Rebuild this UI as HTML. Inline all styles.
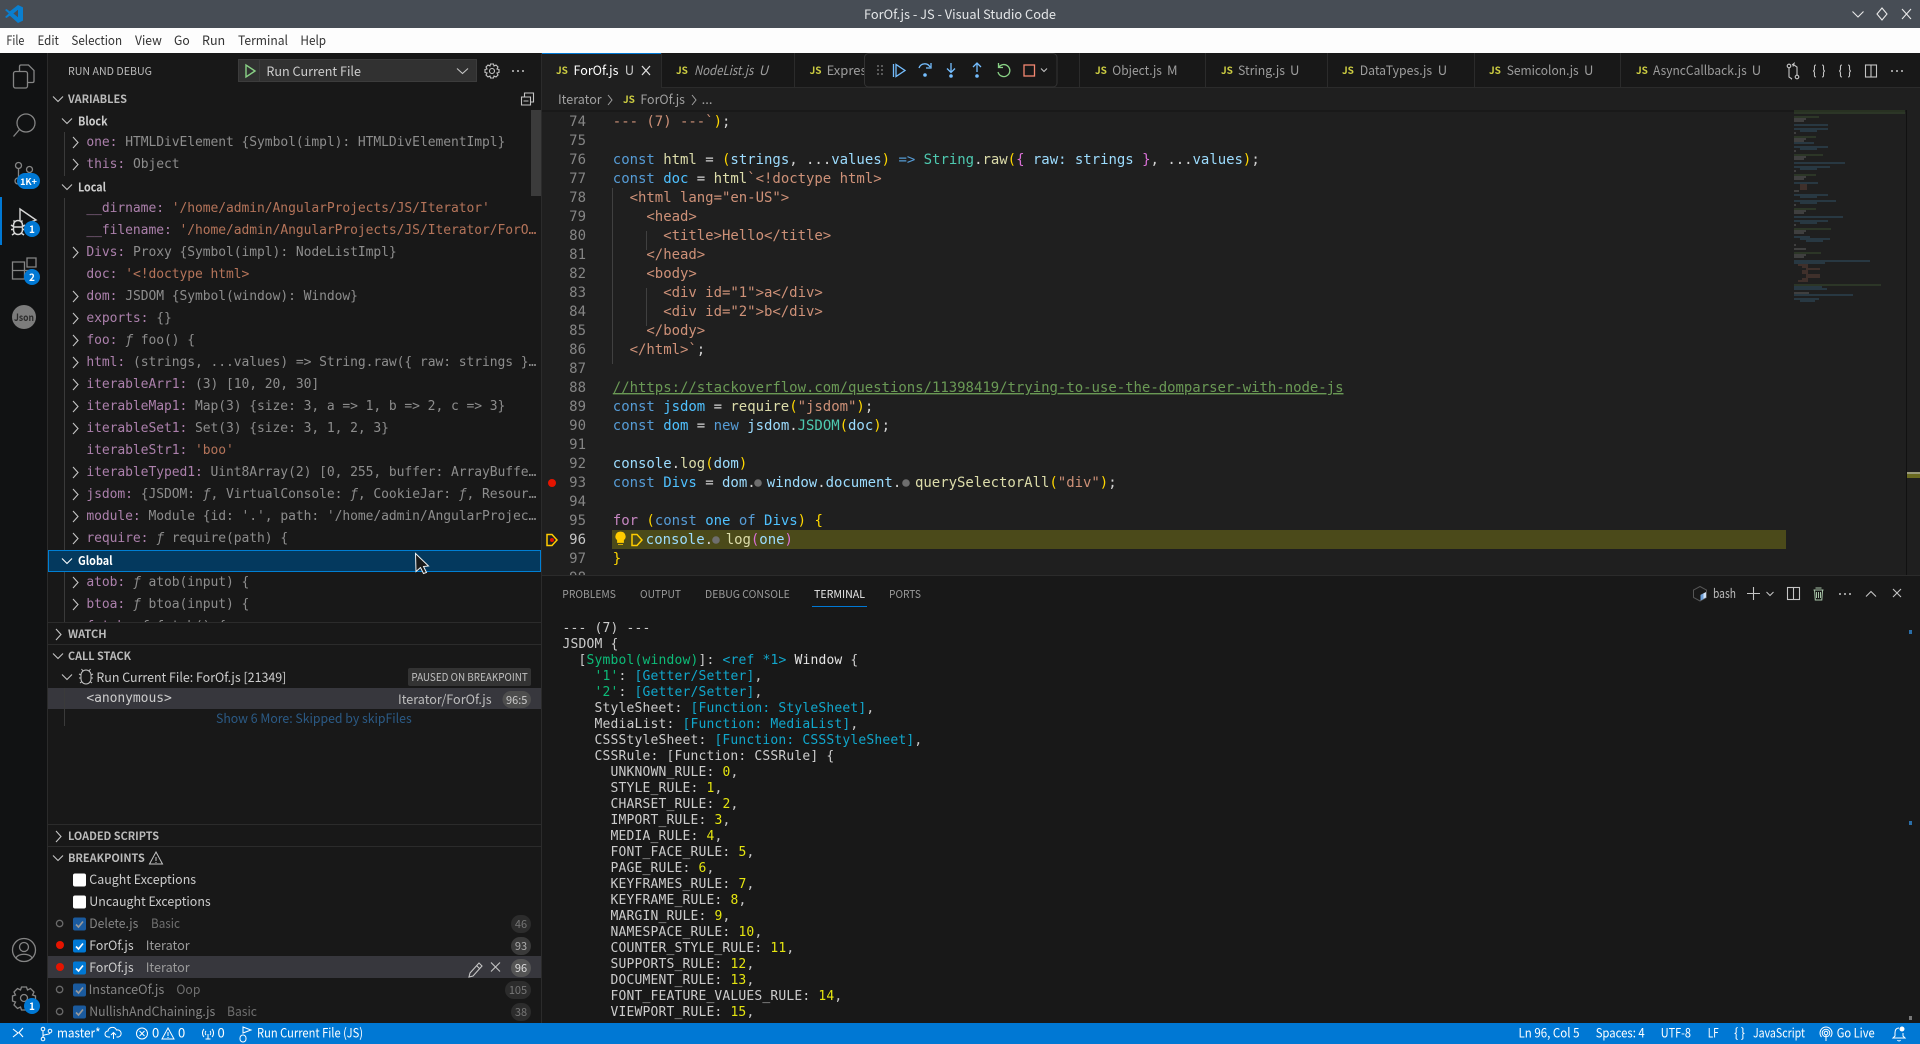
<!DOCTYPE html>
<html><head><meta charset="utf-8"><title>ForOf.js - JS - Visual Studio Code</title>
<style>
html,body{margin:0;padding:0;background:#181818;width:1920px;height:1044px;overflow:hidden}
svg{display:block;position:absolute;left:0;top:0}
text{white-space:pre;font-family:"Noto Sans CJK SC","Liberation Sans",sans-serif;font-size:13px}
.m text,text.m{font-family:"DejaVu Sans Mono",monospace;font-size:13px;letter-spacing:-.07px}
.c text{font-family:"DejaVu Sans Mono",monospace;font-size:14px;letter-spacing:-.03px;fill:#d4d4d4}
.t text{font-family:"DejaVu Sans Mono",monospace;font-size:13px;letter-spacing:.17px;fill:#cccccc}
.n text{font-family:"DejaVu Sans Mono",monospace;font-size:14px;fill:#858585;text-anchor:end}
.h{font-size:11px;font-weight:700;fill:#bbbbbb}
.b{font-size:12px;font-weight:700;fill:#cccccc}
.js{font-size:10px;font-weight:700;fill:#cbcb41}
.tb{fill:#9d9d9d}
.p{font-size:11px;fill:#9a9a9a}
.bc{fill:#a0a0a0}
.k{fill:#ac80ac}.v{fill:#8d8d8d}.st{fill:#b5745a}
.kw{fill:#569cd6}.vr{fill:#9cdcfe}.cn{fill:#4fc1ff}.str{fill:#ce9178}.fn{fill:#dcdcaa}.cl{fill:#4ec9b0}.pu{fill:#c586c0}.go{fill:#ffd700}.or{fill:#da70d6}.bl{fill:#179fff}.cm{fill:#6a9955}
.gr{fill:#0dbc79}.cy{fill:#11a8cd}.ye{fill:#e5e510}.wh{fill:#e5e5e5}
.ic{fill:none;stroke:#858585;stroke-width:1.3}
.ui{fill:none;stroke:#c5c5c5;stroke-width:1.1}
.ch{fill:none;stroke:#c5c5c5;stroke-width:1.1}
.bd{font-size:11px;fill:#cccccc;text-anchor:middle}
</style></head><body>
<svg width="1920" height="1044" viewBox="0 0 1920 1044" xmlns="http://www.w3.org/2000/svg">
<defs>
<clipPath id="ed"><rect x="542" y="110" width="1378" height="465"/></clipPath>
<clipPath id="vars"><rect x="48" y="110" width="493" height="512"/></clipPath>
<clipPath id="tabx"><rect x="542" y="53" width="322" height="34"/></clipPath>
</defs>
<!-- backgrounds -->
<rect width="1920" height="1044" fill="#181818"/>
<rect width="1920" height="28" fill="#474d55"/>
<rect y="28" width="1920" height="25" fill="#fdfdfd"/>
<rect y="53" width="47.5" height="970" fill="#111213"/>
<rect x="47" y="53" width="1" height="970" fill="#2b2b2b"/>
<rect x="541" y="53" width="1" height="970" fill="#2b2b2b"/>
<rect x="542" y="88" width="1378" height="487" fill="#1f1f1f"/>
<rect x="542" y="87" width="1378" height="1" fill="#2b2b2b"/>
<rect x="542" y="575" width="1378" height="1" fill="#2b2b2b"/>
<rect x="542" y="110" width="1364" height="2" fill="#191919"/>
<rect y="1023" width="1920" height="21" fill="#0078d4"/>

<!-- title bar -->
<path d="M18 5l5 2.400v13.200L18 23l-8.200-7.400L6.600 18 5 17l3.800-3.500L5 10l1.600-1 3.200 2.400zM18 9.700l-4.600 3.800 4.600 3.800z" fill="#0a7fcf"/>
<text x="864" y="19" fill="#e4e6e8" textLength="192" lengthAdjust="spacingAndGlyphs">ForOf.js - JS - Visual Studio Code</text>
<path d="M1852.500 11.500l5.500 5.500 5.500-5.500" fill="none" stroke="#e8e8e8" stroke-width="1.100"/>
<path d="M1882 8l5 6-5 6-5-6z" fill="none" stroke="#e8e8e8" stroke-width="1.100"/>
<path d="M1902 9l9 10M1911 9l-9 10" fill="none" stroke="#e8e8e8" stroke-width="1.100"/>

<!-- menu -->
<g fill="#333">
<text x="6.400" y="45" textLength="18" lengthAdjust="spacingAndGlyphs">File</text>
<text x="37.500" y="45" textLength="21.400" lengthAdjust="spacingAndGlyphs">Edit</text>
<text x="71.400" y="45" textLength="50.700" lengthAdjust="spacingAndGlyphs">Selection</text>
<text x="135" y="45" textLength="26.800" lengthAdjust="spacingAndGlyphs">View</text>
<text x="174" y="45" textLength="15.700" lengthAdjust="spacingAndGlyphs">Go</text>
<text x="202" y="45" textLength="23.200" lengthAdjust="spacingAndGlyphs">Run</text>
<text x="238" y="45" textLength="50" lengthAdjust="spacingAndGlyphs">Terminal</text>
<text x="300.400" y="45" textLength="25.700" lengthAdjust="spacingAndGlyphs">Help</text>
</g>

<!-- activity bar -->
<rect x="0" y="197" width="2" height="48" fill="#0078d4"/>
<path class="ic" d="M19.500 71v-4.500q0-1.500 1.500-1.500h7.500l5.500 5.500v10.500q0 1.500-1.500 1.500H27.500"/>
<rect class="ic" x="13.500" y="71.500" width="14" height="16.500" rx="2"/>
<circle class="ic" cx="26" cy="123" r="9"/><path class="ic" d="M19.500 129.500l-6 7"/>
<circle class="ic" cx="18.500" cy="165.500" r="3"/><circle class="ic" cx="29.500" cy="169.500" r="3"/><circle class="ic" cx="18" cy="181" r="3"/><path class="ic" d="M18.500 168.500v10M29.500 172.500c0 4-11 3-11 7"/>
<rect x="17" y="173" width="23" height="16" rx="8" fill="#0078d4"/>
<text class="bd" x="28.500" y="185" style="font-size:9px;font-weight:700;fill:#fff">1K+</text>
<path d="M20 221v-12l16 11-8 3" fill="none" stroke="#d7d7d7" stroke-width="1.400"/>
<path d="M13.500 225a4.500 4.500 0 0 1 9 0v5a4.500 4.500 0 0 1-9 0zM11 225l3 2M25 225l-3 2M11 229.500h3M25 229.500h-3M12 235l3-2M24 235l-3-2M15 222l-1.500-1.500M21 222l1.500-1.500M13.500 227h9" fill="none" stroke="#d7d7d7" stroke-width="1.500"/>
<circle cx="32" cy="229" r="8" fill="#0078d4"/><text class="bd" x="32" y="233" style="font-size:10px;font-weight:700;fill:#fff">1</text>
<path class="ic" d="M12.500 262h12v17h-12zM12.500 270.500h12M24.500 270.500h8.500v8.500h-8.500M27 258h9v9h-9z"/>
<circle cx="32" cy="277" r="8" fill="#0078d4"/><text class="bd" x="32" y="281" style="font-size:10px;font-weight:700;fill:#fff">2</text>
<circle cx="24" cy="317" r="12" fill="#7c7c7c"/>
<text x="14" y="321" style="font-size:10px;font-weight:700;fill:#2c2c2c" textLength="20" lengthAdjust="spacingAndGlyphs">Json</text>
<circle class="ic" cx="24" cy="950" r="11.500"/><circle class="ic" cx="24" cy="947" r="4.500"/><path class="ic" d="M16 958c2-5 14-5 16 0"/>
<g class="ic" transform="translate(24 998)"><circle r="3.500"/><path d="M-2.500-11h5l1 3 3-1.500 3.500 3.500-1.500 3 3 1v5l-3 1 1.500 3-3.500 3.500-3-1.500-1 3h-5l-1-3-3 1.500-3.500-3.500 1.500-3-3-1v-5l3-1-1.500-3 3.500-3.500 3 1.500z"/></g>
<circle cx="32" cy="1006" r="8" fill="#0078d4"/><text class="bd" x="32" y="1010" style="font-size:10px;font-weight:700;fill:#fff">1</text>

<!-- sidebar head -->
<text x="68" y="75" style="font-size:11px;fill:#bbbbbb" textLength="84" lengthAdjust="spacingAndGlyphs">RUN AND DEBUG</text>
<rect x="238.500" y="59.500" width="238" height="22" fill="#313131" stroke="#3c3c3c"/>
<rect x="259" y="60" width="1" height="21" fill="#3c3c3c"/>
<path d="M246 65v12l9-6z" fill="none" stroke="#89d185" stroke-width="1.400"/>
<text x="266.400" y="76" fill="#cccccc" textLength="94.600" lengthAdjust="spacingAndGlyphs">Run Current File</text>
<path class="ch" d="M457 68.500l5.500 5 5.500-5"/>
<g class="ui" transform="translate(492 71)"><circle r="2.500"/><path d="M-1.500-7h3l.5 2 2-1 2 2-1 2 2 .5v3l-2 .5 1 2-2 2-2-1-.5 2h-3l-.5-2-2 1-2-2 1-2-2-.5v-3l2-.5-1-2 2-2 2 1z"/></g>
<g fill="#c5c5c5"><circle cx="513" cy="71" r="1"/><circle cx="518" cy="71" r="1"/><circle cx="523" cy="71" r="1"/></g>

<!-- variables -->
<path class="ch" d="M53 96.500l5 5 5-5"/>
<text class="h" x="68" y="103" textLength="59" lengthAdjust="spacingAndGlyphs">VARIABLES</text>
<path class="ui" d="M521.500 97h9v8h-9zM524.500 97v-4h9v9h-3M523.500 101h5"/>

<rect x="48" y="550" width="493" height="22" fill="#04395e"/>
<rect x="48.500" y="550.500" width="492" height="21" fill="none" stroke="#007fd4"/>

<g clip-path="url(#vars)">
<rect x="64" y="132" width="1" height="44" fill="#3a3a3a"/>
<rect x="64" y="198" width="1" height="352" fill="#3a3a3a"/>
<rect x="64" y="572" width="1" height="50" fill="#3a3a3a"/>
<path class="ch" d="M62 118.500l5 5 5-5M62 184.500l5 5 5-5"/>
<text class="b" x="78" y="125.500" textLength="29.600" lengthAdjust="spacingAndGlyphs">Block</text>
<text class="b" x="78" y="191.500" textLength="28" lengthAdjust="spacingAndGlyphs">Local</text>
<path class="ch" d="M73 137l5 5.500-5 5.500M73 159l5 5.500-5 5.500M73 247l5 5.500-5 5.500M73 291l5 5.500-5 5.500M73 313l5 5.500-5 5.500M73 335l5 5.500-5 5.500M73 357l5 5.500-5 5.500M73 379l5 5.500-5 5.500M73 401l5 5.500-5 5.500M73 423l5 5.500-5 5.500M73 467l5 5.500-5 5.500M73 489l5 5.500-5 5.500M73 511l5 5.500-5 5.500M73 533l5 5.500-5 5.500M73 577l5 5.500-5 5.500M73 599l5 5.500-5 5.500"/>
<g class="m">
<text x="86.400" y="146"><tspan class="k">one: </tspan><tspan class="v">HTMLDivElement {Symbol(impl): HTMLDivElementImpl}</tspan></text>
<text x="86.400" y="168"><tspan class="k">this: </tspan><tspan class="v">Object</tspan></text>
<text x="86.400" y="212"><tspan class="k">__dirname: </tspan><tspan class="st">'/home/admin/AngularProjects/JS/Iterator'</tspan></text>
<text x="86.400" y="234"><tspan class="k">__filename: </tspan><tspan class="st">'/home/admin/AngularProjects/JS/Iterator/ForO…</tspan></text>
<text x="86.400" y="256"><tspan class="k">Divs: </tspan><tspan class="v">Proxy {Symbol(impl): NodeListImpl}</tspan></text>
<text x="86.400" y="278"><tspan class="k">doc: </tspan><tspan class="st">'&lt;!doctype html&gt;</tspan></text>
<text x="86.400" y="300"><tspan class="k">dom: </tspan><tspan class="v">JSDOM {Symbol(window): Window}</tspan></text>
<text x="86.400" y="322"><tspan class="k">exports: </tspan><tspan class="v">{}</tspan></text>
<text x="86.400" y="344"><tspan class="k">foo: </tspan><tspan class="v" font-style="italic">ƒ</tspan><tspan class="v"> foo() {</tspan></text>
<text x="86.400" y="366"><tspan class="k">html: </tspan><tspan class="v">(strings, ...values) =&gt; String.raw({ raw: strings }…</tspan></text>
<text x="86.400" y="388"><tspan class="k">iterableArr1: </tspan><tspan class="v">(3) [10, 20, 30]</tspan></text>
<text x="86.400" y="410"><tspan class="k">iterableMap1: </tspan><tspan class="v">Map(3) {size: 3, a =&gt; 1, b =&gt; 2, c =&gt; 3}</tspan></text>
<text x="86.400" y="432"><tspan class="k">iterableSet1: </tspan><tspan class="v">Set(3) {size: 3, 1, 2, 3}</tspan></text>
<text x="86.400" y="454"><tspan class="k">iterableStr1: </tspan><tspan class="st">'boo'</tspan></text>
<text x="86.400" y="476"><tspan class="k">iterableTyped1: </tspan><tspan class="v">Uint8Array(2) [0, 255, buffer: ArrayBuffe…</tspan></text>
<text x="86.400" y="498"><tspan class="k">jsdom: </tspan><tspan class="v">{JSDOM: </tspan><tspan class="v" font-style="italic">ƒ</tspan><tspan class="v">, VirtualConsole: </tspan><tspan class="v" font-style="italic">ƒ</tspan><tspan class="v">, CookieJar: </tspan><tspan class="v" font-style="italic">ƒ</tspan><tspan class="v">, Resour…</tspan></text>
<text x="86.400" y="520"><tspan class="k">module: </tspan><tspan class="v">Module {id: '.', path: '/home/admin/AngularProjec…</tspan></text>
<text x="86.400" y="542"><tspan class="k">require: </tspan><tspan class="v" font-style="italic">ƒ</tspan><tspan class="v"> require(path) {</tspan></text>
<text x="86.400" y="586"><tspan class="k">atob: </tspan><tspan class="v" font-style="italic">ƒ</tspan><tspan class="v"> atob(input) {</tspan></text>
<text x="86.400" y="608"><tspan class="k">btoa: </tspan><tspan class="v" font-style="italic">ƒ</tspan><tspan class="v"> btoa(input) {</tspan></text>
<text x="86.400" y="630"><tspan class="k">fetch: </tspan><tspan class="v" font-style="italic">ƒ</tspan><tspan class="v"> fetch() {</tspan></text>
</g>
</g>
<rect x="531" y="110" width="10" height="86" fill="#3f3f3f" fill-opacity=".9"/>
<path d="M62 558.500l5 5 5-5" fill="none" stroke="#ffffff" stroke-width="1.100"/>
<text x="78" y="565" style="font-size:12px;font-weight:700;fill:#ffffff" textLength="34.600" lengthAdjust="spacingAndGlyphs">Global</text>
<path d="M415.500 553.500l13 12.500-5 .5 3 6-3 1-3-6-4.500 4z" fill="#1a1a1a" stroke="#f0f0f0" stroke-width="1"/>

<!-- watch / call stack -->
<rect x="48" y="622" width="493" height="1" fill="#2b2b2b"/>
<path class="ch" d="M56 629l5 5.500-5 5.500"/>
<text class="h" x="68" y="638" textLength="38.600" lengthAdjust="spacingAndGlyphs">WATCH</text>
<rect x="48" y="644" width="493" height="1" fill="#2b2b2b"/>
<path class="ch" d="M53 653.500l5 5 5-5"/>
<text class="h" x="68" y="660" textLength="63" lengthAdjust="spacingAndGlyphs">CALL STACK</text>
<path class="ch" d="M62 674.500l5 5 5-5"/>
<path d="M81 675a5 5 0 0 1 10 0v4a5 5 0 0 1-10 0zM79 674l2 1M93 674l-2 1M79 678h2M93 678h-2M80 683l2-1.500M92 683l-2-1.500M83 671l-1.500-2M89 671l1.500-2" fill="none" stroke="#c5c5c5" stroke-width="1"/>
<text x="96.400" y="682" fill="#cccccc" textLength="190" lengthAdjust="spacingAndGlyphs">Run Current File: ForOf.js [21349]</text>
<rect x="408" y="668" width="123" height="18" rx="2" fill="#333333"/>
<text x="411.400" y="681" style="font-size:11px;fill:#c0c0c0" textLength="116.400" lengthAdjust="spacingAndGlyphs">PAUSED ON BREAKPOINT</text>
<rect x="48" y="688" width="493" height="21" fill="#37373d"/>
<rect x="64" y="688" width="1" height="38" fill="#3a3a3a"/>
<text class="m" x="86.400" y="702" fill="#cccccc">&lt;anonymous&gt;</text>
<text x="398" y="704" fill="#bdbdbd" textLength="93.600" lengthAdjust="spacingAndGlyphs">Iterator/ForOf.js</text>
<rect x="502.500" y="691" width="28.500" height="17" rx="8.500" fill="#4d4d4d"/>
<text class="bd" x="516.700" y="704">96:5</text>
<text x="216" y="723" fill="#2b5a85" textLength="195.700" lengthAdjust="spacingAndGlyphs">Show 6 More: Skipped by skipFiles</text>

<!-- loaded/breakpoints -->
<rect x="48" y="824" width="493" height="1" fill="#2b2b2b"/>
<path class="ch" d="M56 831l5 5.500-5 5.500"/>
<text class="h" x="68" y="840" textLength="91" lengthAdjust="spacingAndGlyphs">LOADED SCRIPTS</text>
<rect x="48" y="846" width="493" height="1" fill="#2b2b2b"/>
<path class="ch" d="M53 855.500l5 5 5-5"/>
<text class="h" x="68" y="862" textLength="76.800" lengthAdjust="spacingAndGlyphs">BREAKPOINTS</text>
<path d="M156 852l6.500 12h-13zM156 857v4M156 862v1" fill="none" stroke="#c5c5c5" stroke-width="1"/>
<rect x="48" y="956" width="493" height="22" fill="#37373d"/>
<rect x="73" y="873.500" width="13" height="13" rx="2" fill="#ffffff"/>
<rect x="73" y="895.500" width="13" height="13" rx="2" fill="#ffffff"/>
<text x="89.300" y="884" fill="#cccccc" textLength="106.800" lengthAdjust="spacingAndGlyphs">Caught Exceptions</text>
<text x="89.300" y="906" fill="#cccccc" textLength="121.400" lengthAdjust="spacingAndGlyphs">Uncaught Exceptions</text>
<circle cx="59.600" cy="923.500" r="3.200" fill="none" stroke="#6a6a6a" stroke-width="1.300"/>
<circle cx="59.600" cy="989.500" r="3.200" fill="none" stroke="#6a6a6a" stroke-width="1.300"/>
<circle cx="59.600" cy="1011.500" r="3.200" fill="none" stroke="#6a6a6a" stroke-width="1.300"/>
<circle cx="60" cy="945" r="4" fill="#e51400"/>
<circle cx="60" cy="967" r="4" fill="#e51400"/>
<g>
<rect x="73" y="917.500" width="13" height="13" rx="2" fill="#1a5a9e"/><path d="M76 924.500l2.500 2.500 4.500-5.500" fill="none" stroke="#9a9a9a" stroke-width="1.600"/>
<rect x="73" y="939.500" width="13" height="13" rx="2" fill="#0078d4"/><path d="M76 946.500l2.500 2.500 4.500-5.500" fill="none" stroke="#fff" stroke-width="1.600"/>
<rect x="73" y="961.500" width="13" height="13" rx="2" fill="#0078d4"/><path d="M76 968.500l2.500 2.500 4.500-5.500" fill="none" stroke="#fff" stroke-width="1.600"/>
<rect x="73" y="983.500" width="13" height="13" rx="2" fill="#1a5a9e"/><path d="M76 990.500l2.500 2.500 4.500-5.500" fill="none" stroke="#9a9a9a" stroke-width="1.600"/>
<rect x="73" y="1005.500" width="13" height="13" rx="2" fill="#1a5a9e"/><path d="M76 1012.500l2.500 2.500 4.500-5.500" fill="none" stroke="#9a9a9a" stroke-width="1.600"/>
</g>
<text x="89.300" y="928" fill="#858585" textLength="49" lengthAdjust="spacingAndGlyphs">Delete.js</text><text x="151" y="928" fill="#6f6f6f" textLength="29" lengthAdjust="spacingAndGlyphs">Basic</text>
<text x="89.300" y="950" fill="#cccccc" textLength="44.300" lengthAdjust="spacingAndGlyphs">ForOf.js</text><text x="145.700" y="950" fill="#9a9a9a" textLength="44" lengthAdjust="spacingAndGlyphs">Iterator</text>
<text x="89.300" y="972" fill="#cccccc" textLength="44.300" lengthAdjust="spacingAndGlyphs">ForOf.js</text><text x="145.700" y="972" fill="#9a9a9a" textLength="44" lengthAdjust="spacingAndGlyphs">Iterator</text>
<text x="88.600" y="994" fill="#858585" textLength="75.700" lengthAdjust="spacingAndGlyphs">InstanceOf.js</text><text x="176.400" y="994" fill="#6f6f6f" textLength="24" lengthAdjust="spacingAndGlyphs">Oop</text>
<text x="89.300" y="1016" fill="#858585" textLength="126" lengthAdjust="spacingAndGlyphs">NullishAndChaining.js</text><text x="227" y="1016" fill="#6f6f6f" textLength="30" lengthAdjust="spacingAndGlyphs">Basic</text>
<path d="M470 973l9-10 3 3-9 10-4 1zM476.500 965.500l3 3" fill="none" stroke="#c5c5c5" stroke-width="1.100"/>
<path d="M491 962.500l9 9M500 962.500l-9 9" fill="none" stroke="#c5c5c5" stroke-width="1.100"/>
<rect x="511" y="915" width="20" height="18" rx="9" fill="#2c2c2c"/><text class="bd" x="521" y="928" style="fill:#777">46</text>
<rect x="511" y="937" width="20" height="18" rx="9" fill="#3a3a3a"/><text class="bd" x="521" y="950" style="fill:#aaa">93</text>
<rect x="511" y="959" width="20" height="18" rx="9" fill="#555555"/><text class="bd" x="521" y="972" style="fill:#e0e0e0">96</text>
<rect x="505" y="981" width="26" height="18" rx="9" fill="#2c2c2c"/><text class="bd" x="518" y="994" style="fill:#777">105</text>
<rect x="511" y="1003" width="20" height="18" rx="9" fill="#2c2c2c"/><text class="bd" x="521" y="1016" style="fill:#777">38</text>

<!-- tabs -->
<rect x="542" y="53" width="119" height="35" fill="#1f1f1f"/>
<rect x="542" y="53" width="119" height="1" fill="#0078d4"/>
<g fill="#2b2b2b"><rect x="661" y="53" width="1" height="34"/><rect x="794" y="53" width="1" height="34"/><rect x="1079" y="53" width="1" height="34"/><rect x="1205" y="53" width="1" height="34"/><rect x="1327" y="53" width="1" height="34"/><rect x="1474" y="53" width="1" height="34"/><rect x="1620" y="53" width="1" height="34"/></g>
<text class="js" x="556" y="74">JS</text>
<text x="573.500" y="75" fill="#ffffff" textLength="45" lengthAdjust="spacingAndGlyphs">ForOf.js</text>
<text x="624.800" y="75" fill="#c6c6c6">U</text>
<path d="M642 66l8 9M650 66l-8 9" fill="none" stroke="#dddddd" stroke-width="1.300"/>
<text class="js" x="676" y="74">JS</text>
<text class="tb" x="694" y="75" font-style="italic" textLength="59.400" lengthAdjust="spacingAndGlyphs">NodeList.js</text>
<text class="tb" x="758.800" y="75" font-style="italic">U</text>
<text class="js" x="809.600" y="74">JS</text>
<g clip-path="url(#tabx)"><text class="tb" x="826.600" y="75">Expressions.js</text></g>
<text class="js" x="1095" y="74">JS</text>
<text class="tb" x="1112.300" y="75" textLength="49.600" lengthAdjust="spacingAndGlyphs">Object.js</text>
<text class="tb" x="1167" y="75">M</text>
<text class="js" x="1221" y="74">JS</text>
<text class="tb" x="1238" y="75" textLength="47" lengthAdjust="spacingAndGlyphs">String.js</text>
<text class="tb" x="1290" y="75">U</text>
<text class="js" x="1342" y="74">JS</text>
<text class="tb" x="1359.700" y="75" textLength="72.400" lengthAdjust="spacingAndGlyphs">DataTypes.js</text>
<text class="tb" x="1437.700" y="75">U</text>
<text class="js" x="1489" y="74">JS</text>
<text class="tb" x="1506.700" y="75" textLength="72" lengthAdjust="spacingAndGlyphs">Semicolon.js</text>
<text class="tb" x="1584" y="75">U</text>
<text class="js" x="1636" y="74">JS</text>
<text class="tb" x="1653" y="75" textLength="93.700" lengthAdjust="spacingAndGlyphs">AsyncCallback.js</text>
<text class="tb" x="1751.700" y="75">U</text>
<!-- tab actions -->
<g class="ui">
<circle cx="1789" cy="66" r="1.800"/><circle cx="1797" cy="77" r="1.800"/><path d="M1789 68v9l3 2M1797 75v-8l-3-2M1792 65l2-1.500-1 3M1792 79h-1"/>
<path d="M1816 65c-2 0-1.500 2-1.500 3.500s-.5 2.500-1.500 2.500c1 0 1.500 1 1.500 2.500s-.5 3.500 1.500 3.500M1822 65c2 0 1.500 2 1.500 3.500s.5 2.500 1.500 2.500c-1 0-1.500 1-1.500 2.500s.5 3.500-1.500 3.500"/>
<path d="M1842 65c-2 0-1.500 2-1.500 3.500s-.5 2.500-1.500 2.500c1 0 1.500 1 1.500 2.500s-.5 3.500 1.500 3.500M1848 65c2 0 1.500 2 1.500 3.500s.5 2.500 1.500 2.500c-1 0-1.500 1-1.500 2.500s.5 3.500-1.500 3.500"/>
<rect x="1865.500" y="65" width="11" height="12"/><path d="M1871 65v12"/>
</g>
<g fill="#c5c5c5"><circle cx="1892" cy="71" r="1"/><circle cx="1897" cy="71" r="1"/><circle cx="1902" cy="71" r="1"/></g>

<!-- debug toolbar -->
<rect x="864.500" y="53.500" width="192.500" height="33.500" rx="4" fill="#181818" stroke="#333333"/>
<g fill="#8a8a8a"><circle cx="878" cy="66" r=".9"/><circle cx="882" cy="66" r=".9"/><circle cx="878" cy="70" r=".9"/><circle cx="882" cy="70" r=".9"/><circle cx="878" cy="74" r=".9"/><circle cx="882" cy="74" r=".9"/></g>
<path d="M893.500 64v13M896 64.500v12l9-6z" fill="none" stroke="#75beff" stroke-width="1.300"/>
<path d="M919 68a6 6 0 0 1 11-1M931 63v5h-5" fill="none" stroke="#75beff" stroke-width="1.300"/><circle cx="925" cy="75" r="1.800" fill="#75beff"/>
<path d="M951 63v9M947 68.500l4 4 4-4" fill="none" stroke="#75beff" stroke-width="1.300"/><circle cx="951" cy="76" r="1.800" fill="#75beff"/>
<path d="M977 72v-9M973 67l4-4 4 4" fill="none" stroke="#75beff" stroke-width="1.300"/><circle cx="977" cy="76" r="1.800" fill="#75beff"/>
<path d="M999 67a6 6 0 1 1-1 5M998.500 63v4.500h4.500" fill="none" stroke="#89d185" stroke-width="1.300"/>
<rect x="1024" y="65" width="10.500" height="11" fill="none" stroke="#f48771" stroke-width="1.300"/>
<path d="M1041 68.500l3 3 3-3" fill="none" stroke="#c5c5c5" stroke-width="1"/>

<!-- breadcrumb -->
<text class="bc" x="558" y="104" textLength="43.700" lengthAdjust="spacingAndGlyphs">Iterator</text>
<path d="M608 95l4 5-4 5" fill="none" stroke="#a0a0a0" stroke-width="1"/>
<text class="js" x="623" y="103">JS</text>
<text class="bc" x="640.400" y="104" textLength="44.600" lengthAdjust="spacingAndGlyphs">ForOf.js</text>
<path d="M692 95l4 5-4 5" fill="none" stroke="#a0a0a0" stroke-width="1"/>
<text class="bc" x="701.600" y="104">...</text>

<!-- editor -->
<g clip-path="url(#ed)">
<rect x="612" y="530" width="1174" height="19" fill="#4b4a1a"/>
<rect x="612" y="188" width="1" height="176" fill="#404040"/>
<rect x="646" y="231" width="1" height="19" fill="#404040"/>
<rect x="646" y="288" width="1" height="38" fill="#404040"/>
<g class="n">
<text x="586" y="126">74</text><text x="586" y="145">75</text><text x="586" y="164">76</text><text x="586" y="183">77</text><text x="586" y="202">78</text><text x="586" y="221">79</text><text x="586" y="240">80</text><text x="586" y="259">81</text><text x="586" y="278">82</text><text x="586" y="297">83</text><text x="586" y="316">84</text><text x="586" y="335">85</text><text x="586" y="354">86</text><text x="586" y="373">87</text><text x="586" y="392">88</text><text x="586" y="411">89</text><text x="586" y="430">90</text><text x="586" y="449">91</text><text x="586" y="468">92</text><text x="586" y="487">93</text><text x="586" y="506">94</text><text x="586" y="525">95</text><text x="586" y="544" style="fill:#c6c6c6">96</text><text x="586" y="563">97</text><text x="586" y="582">98</text>
</g>
<circle cx="552" cy="483" r="4" fill="#e51400"/>
<path d="M547 534.500h5l5 5.500-5 5.500h-5z" fill="none" stroke="#ffcc00" stroke-width="1.500"/><circle cx="552" cy="540" r="2" fill="#e51400"/>
<g class="c">
<text x="612.800" y="126"><tspan class="str">--- (7) ---`</tspan><tspan class="go">)</tspan>;</text>
<text x="612.800" y="164"><tspan class="kw">const</tspan> <tspan class="fn">html</tspan> = <tspan class="go">(</tspan><tspan class="vr">strings</tspan>, ...<tspan class="vr">values</tspan><tspan class="go">)</tspan> <tspan class="kw">=&gt;</tspan> <tspan class="cl">String</tspan>.<tspan class="fn">raw</tspan><tspan class="go">(</tspan><tspan class="or">{</tspan> <tspan class="vr">raw:</tspan> <tspan class="vr">strings</tspan> <tspan class="or">}</tspan>, ...<tspan class="vr">values</tspan><tspan class="go">)</tspan>;</text>
<text x="612.800" y="183"><tspan class="kw">const</tspan> <tspan class="cn">doc</tspan> = <tspan class="fn">html</tspan><tspan class="str">`&lt;!doctype html&gt;</tspan></text>
<text x="612.800" y="202" style="fill:#ce9178">  &lt;html lang="en-US"&gt;</text>
<text x="612.800" y="221" style="fill:#ce9178">    &lt;head&gt;</text>
<text x="612.800" y="240" style="fill:#ce9178">      &lt;title&gt;Hello&lt;/title&gt;</text>
<text x="612.800" y="259" style="fill:#ce9178">    &lt;/head&gt;</text>
<text x="612.800" y="278" style="fill:#ce9178">    &lt;body&gt;</text>
<text x="612.800" y="297" style="fill:#ce9178">      &lt;div id="1"&gt;a&lt;/div&gt;</text>
<text x="612.800" y="316" style="fill:#ce9178">      &lt;div id="2"&gt;b&lt;/div&gt;</text>
<text x="612.800" y="335" style="fill:#ce9178">    &lt;/body&gt;</text>
<text x="612.800" y="354"><tspan class="str">  &lt;/html&gt;`</tspan>;</text>
<text x="612.800" y="392" style="fill:#6a9955;text-decoration:underline">//https://stackoverflow.com/questions/11398419/trying-to-use-the-domparser-with-node-js</text>
<text x="612.800" y="411"><tspan class="kw">const</tspan> <tspan class="cn">jsdom</tspan> = <tspan class="fn">require</tspan><tspan class="go">(</tspan><tspan class="str">"jsdom"</tspan><tspan class="go">)</tspan>;</text>
<text x="612.800" y="430"><tspan class="kw">const</tspan> <tspan class="cn">dom</tspan> = <tspan class="kw">new</tspan> <tspan class="vr">jsdom</tspan>.<tspan class="cl">JSDOM</tspan><tspan class="go">(</tspan><tspan class="vr">doc</tspan><tspan class="go">)</tspan>;</text>
<text x="612.800" y="468"><tspan class="vr">console</tspan>.<tspan class="fn">log</tspan><tspan class="go">(</tspan><tspan class="vr">dom</tspan><tspan class="go">)</tspan></text>
<text x="612.800" y="487"><tspan class="kw">const</tspan> <tspan class="cn">Divs</tspan> = <tspan class="vr">dom</tspan>.</text>
<circle cx="758" cy="483" r="3.800" fill="#6e6e6e"/>
<text x="766.800" y="487"><tspan class="vr">window</tspan>.<tspan class="vr">document</tspan>.</text>
<circle cx="906" cy="483" r="3.800" fill="#6e6e6e"/>
<text x="915" y="487"><tspan class="fn">querySelectorAll</tspan><tspan class="go">(</tspan><tspan class="str">"div"</tspan><tspan class="go">)</tspan>;</text>
<text x="612.800" y="525"><tspan class="pu">for</tspan> <tspan class="go">(</tspan><tspan class="kw">const</tspan> <tspan class="cn">one</tspan> <tspan class="kw">of</tspan> <tspan class="cn">Divs</tspan><tspan class="go">)</tspan> <tspan class="go">{</tspan></text>
<path d="M620.500 532a4.500 4.500 0 0 1 3 8v2.500h-6V540a4.500 4.500 0 0 1 3-8zM618 544.500h5" fill="#ffcc00" stroke="#ffcc00" stroke-width=".8"/>
<path d="M632 534.500h5l5 5.500-5 5.500h-5z" fill="none" stroke="#ffcc00" stroke-width="1.500"/>
<text x="645.800" y="544"><tspan class="vr">console</tspan>.</text>
<circle cx="716" cy="540" r="3.800" fill="#6e6e6e"/>
<text x="725.700" y="544"><tspan class="fn">log</tspan><tspan class="or">(</tspan><tspan class="vr">one</tspan><tspan class="or">)</tspan></text>
<text x="612.800" y="563"><tspan class="go">}</tspan></text>
</g>
</g>

<!-- minimap -->
<g fill="none" stroke-width="1" opacity=".6">
<path stroke="#4a6a3a" d="M1794 111h111M1794 113h111M1794 117h25M1794 137h22M1794 155h29M1794 175h22M1794 209h22M1794 229h37M1794 253h27M1794 285h87"/>
<path stroke="#8a8a8a" d="M1794 119h12M1794 121h10M1794 139h12M1794 141h10M1794 157h12M1794 159h10M1794 177h12M1794 179h10M1794 211h12M1794 213h10M1794 231h12M1794 233h10M1794 255h12M1794 257h10M1794 249h12M1794 133h2M1794 151h2M1794 171h2M1794 191h5M1794 205h2M1794 225h2M1794 245h2M1794 293h15"/>
<path stroke="#3f7396" d="M1794 125h34M1794 129h34M1800 131h17M1794 143h20M1794 147h34M1800 149h17M1794 163h51M1794 167h36M1800 169h17M1794 183h24M1794 195h34M1800 197h17M1794 201h42M1800 203h17M1794 217h49M1794 221h34M1800 223h17M1794 237h16M1800 239h30M1806 241h17M1794 261h76M1794 263h31M1794 287h28M1794 289h33M1794 295h59M1794 299h25M1800 301h15"/>
<path stroke="#8a5a48" d="M1800 185h7M1800 187h7M1800 189h7M1798 265h10M1802 267h6M1806 269h14M1802 271h6M1802 273h6M1806 275h14M1806 277h14M1802 279h6M1798 281h10"/>
</g>
<rect x="1906" y="110" width="1" height="465" fill="#111"/>
<rect x="1907" y="472" width="13" height="2" fill="#9a9a7a"/>
<rect x="1907" y="474" width="13" height="4" fill="#6a6a20"/>

<!-- panel -->
<text class="p" x="562.300" y="598" textLength="53.600" lengthAdjust="spacingAndGlyphs">PROBLEMS</text>
<text class="p" x="640" y="598" textLength="41" lengthAdjust="spacingAndGlyphs">OUTPUT</text>
<text class="p" x="705" y="598" textLength="84.800" lengthAdjust="spacingAndGlyphs">DEBUG CONSOLE</text>
<text x="814" y="598" style="font-size:11px;fill:#e7e7e7" textLength="51" lengthAdjust="spacingAndGlyphs">TERMINAL</text>
<text class="p" x="889" y="598" textLength="32" lengthAdjust="spacingAndGlyphs">PORTS</text>
<rect x="812" y="606" width="55" height="1" fill="#0078d4"/>
<path d="M1700 586.500l6.500 3.500v7.500l-6.500 3.500-6.500-3.500V590z" fill="none" stroke="#555" stroke-width="1"/>
<path d="M1700.500 595l5.500-3v5.500l-5.500 3z" fill="#cfe0f4"/><path d="M1700.500 595l3-1.500v5.500l-3 1.500z" fill="#6d9fd8"/>
<text x="1713" y="598" fill="#bdbdbd" textLength="23" lengthAdjust="spacingAndGlyphs">bash</text>
<path d="M1747 593.500h13M1753.500 587v13" fill="none" stroke="#c5c5c5" stroke-width="1.100"/>
<path d="M1766.500 592l3.500 3.500 3.500-3.500" fill="none" stroke="#c5c5c5" stroke-width="1"/>
<rect x="1787.500" y="587.500" width="12" height="12" fill="none" stroke="#c5c5c5" stroke-width="1.100"/><path d="M1793.500 587.500v12" fill="none" stroke="#c5c5c5" stroke-width="1.100"/>
<path d="M1813.500 590h10M1815.500 588h6M1814.500 590l.8 10h6.500l.8-10M1816.500 592v6M1818.500 592v6M1820.500 592v6" fill="none" stroke="#a8c4a8" stroke-width="1"/>
<g fill="#c5c5c5"><circle cx="1840" cy="594" r="1"/><circle cx="1845" cy="594" r="1"/><circle cx="1850" cy="594" r="1"/></g>
<path d="M1866 596.500l5-5 5 5" fill="none" stroke="#c5c5c5" stroke-width="1.100"/>
<path d="M1893 589l8 8M1901 589l-8 8" fill="none" stroke="#c5c5c5" stroke-width="1.100"/>

<!-- terminal -->
<g class="t">
<text x="562.500" y="632">--- (7) ---</text>
<text x="562.500" y="648">JSDOM {</text>
<text x="562.500" y="664">  [<tspan class="gr">Symbol(window)</tspan>]: <tspan class="cy">&lt;ref *1&gt;</tspan> <tspan class="wh">Window</tspan> {</text>
<text x="562.500" y="680">    <tspan class="gr">'1'</tspan>: <tspan class="cy">[Getter/Setter]</tspan>,</text>
<text x="562.500" y="696">    <tspan class="gr">'2'</tspan>: <tspan class="cy">[Getter/Setter]</tspan>,</text>
<text x="562.500" y="712">    StyleSheet: <tspan class="cy">[Function: StyleSheet]</tspan>,</text>
<text x="562.500" y="728">    MediaList: <tspan class="cy">[Function: MediaList]</tspan>,</text>
<text x="562.500" y="744">    CSSStyleSheet: <tspan class="cy">[Function: CSSStyleSheet]</tspan>,</text>
<text x="562.500" y="760">    CSSRule: [Function: CSSRule] {</text>
<text x="562.500" y="776">      UNKNOWN_RULE: <tspan class="ye">0</tspan>,</text>
<text x="562.500" y="792">      STYLE_RULE: <tspan class="ye">1</tspan>,</text>
<text x="562.500" y="808">      CHARSET_RULE: <tspan class="ye">2</tspan>,</text>
<text x="562.500" y="824">      IMPORT_RULE: <tspan class="ye">3</tspan>,</text>
<text x="562.500" y="840">      MEDIA_RULE: <tspan class="ye">4</tspan>,</text>
<text x="562.500" y="856">      FONT_FACE_RULE: <tspan class="ye">5</tspan>,</text>
<text x="562.500" y="872">      PAGE_RULE: <tspan class="ye">6</tspan>,</text>
<text x="562.500" y="888">      KEYFRAMES_RULE: <tspan class="ye">7</tspan>,</text>
<text x="562.500" y="904">      KEYFRAME_RULE: <tspan class="ye">8</tspan>,</text>
<text x="562.500" y="920">      MARGIN_RULE: <tspan class="ye">9</tspan>,</text>
<text x="562.500" y="936">      NAMESPACE_RULE: <tspan class="ye">10</tspan>,</text>
<text x="562.500" y="952">      COUNTER_STYLE_RULE: <tspan class="ye">11</tspan>,</text>
<text x="562.500" y="968">      SUPPORTS_RULE: <tspan class="ye">12</tspan>,</text>
<text x="562.500" y="984">      DOCUMENT_RULE: <tspan class="ye">13</tspan>,</text>
<text x="562.500" y="1000">      FONT_FEATURE_VALUES_RULE: <tspan class="ye">14</tspan>,</text>
<text x="562.500" y="1016">      VIEWPORT_RULE: <tspan class="ye">15</tspan>,</text>
</g>
<rect x="1909" y="630" width="3" height="4" fill="#2a6ea8"/>
<rect x="1909" y="821" width="3" height="4" fill="#2a6ea8"/>
<rect x="1909" y="1016" width="3" height="4" fill="#777"/>

<!-- status bar -->
<path d="M13 1029l5 4-5 4M23 1028l-4 4.500 4 4.500" fill="none" stroke="#fff" stroke-width="1.100"/>
<g fill="none" stroke="#fff" stroke-width="1">
<circle cx="43" cy="1029" r="1.800"/><circle cx="43" cy="1039" r="1.800"/><circle cx="50" cy="1031" r="1.800"/><path d="M43 1031v6M50 1033c0 2-7 1-7 3"/>
<path d="M110 1037h-2a3 3 0 0 1 0-6 4.500 4.500 0 0 1 8.500-1 3.500 3.500 0 0 1 2 7h-2M113.500 1039v-6M111 1035l2.500-2.500 2.500 2.500"/>
<circle cx="142" cy="1033.500" r="5.500"/><path d="M139.500 1031l5 5M144.500 1031l-5 5"/>
<path d="M168 1028l6 11h-12zM168 1032v4M168 1037v1"/>
<path d="M208 1034v5M205.500 1039h5M204 1029a6 6 0 0 0 0 8M212 1029a6 6 0 0 1 0 8M206 1031a3 3 0 0 0 0 4M210 1031a3 3 0 0 1 0 4"/>
<path d="M243 1027v6l8-3zM240 1038a3 3 0 0 1 6 0v1a3 3 0 0 1-6 0z"/>
</g>
<g fill="#ffffff">
<text x="57" y="1037.500" textLength="43.600" lengthAdjust="spacingAndGlyphs">master*</text>
<text x="152" y="1037.500">0</text>
<text x="178" y="1037.500">0</text>
<text x="217.500" y="1037.500">0</text>
<text x="257" y="1037.500" textLength="106" lengthAdjust="spacingAndGlyphs">Run Current File (JS)</text>
<text x="1518.500" y="1037.500" textLength="61" lengthAdjust="spacingAndGlyphs">Ln 96, Col 5</text>
<text x="1595.700" y="1037.500" textLength="49" lengthAdjust="spacingAndGlyphs">Spaces: 4</text>
<text x="1660.700" y="1037.500" textLength="30.300" lengthAdjust="spacingAndGlyphs">UTF-8</text>
<text x="1707.700" y="1037.500" textLength="11" lengthAdjust="spacingAndGlyphs">LF</text>
<text x="1734" y="1037.500" textLength="11">{ }</text>
<text x="1753" y="1037.500" textLength="52" lengthAdjust="spacingAndGlyphs">JavaScript</text>
<text x="1836.700" y="1037.500" textLength="38" lengthAdjust="spacingAndGlyphs">Go Live</text>
</g>
<g fill="none" stroke="#fff" stroke-width="1">
<circle cx="1826" cy="1033" r="1.800"/><circle cx="1826" cy="1033" r="3.800"/><path d="M1821.500 1037a6 6 0 1 1 9 0M1826 1035v6"/>
<path d="M1899 1028c-3 0-4 2-4 5v3l-2 2h12l-2-2v-3M1897.500 1040a1.600 1.600 0 0 0 3 0"/>
</g>
<circle cx="1902" cy="1029" r="2.500" fill="#fff"/>
</svg>
</body></html>
